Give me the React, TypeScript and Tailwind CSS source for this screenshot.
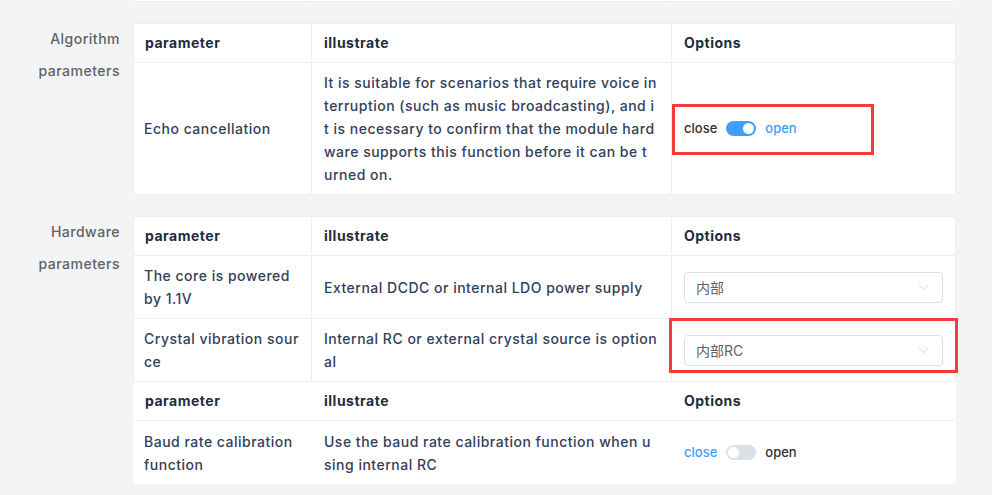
import { ChevronDown } from "lucide-react";

const font = { fontFamily: "Inter, 'Noto Sans CJK SC', sans-serif" };

function Switch({ on }: { on: boolean }) {
  return (
    <div className="flex items-center text-[13px] tracking-normal">
      <span className={on ? "text-[#303133]" : "text-[#409eff]"}>close</span>
      <span
        className={`mx-[9px] flex h-[15px] w-[30px] items-center rounded-full px-[2px] ${
          on ? "justify-end bg-[#409eff]" : "justify-start bg-[#dcdfe6]"
        }`}
      >
        <span className="h-[11px] w-[11px] rounded-full bg-white" />
      </span>
      <span className={on ? "text-[#409eff]" : "text-[#303133]"}>open</span>
    </div>
  );
}

function Select({ value }: { value: string }) {
  return (
    <div className="flex h-[31px] w-[259px] items-center justify-between rounded-[4px] border border-[#dcdfe6] bg-white pl-[11px] pr-[10px] text-[14px] font-normal tracking-normal text-[#606266]">
      <span>{value}</span>
      <ChevronDown size={17} strokeWidth={1} className="text-[#c0c4cc]" />
    </div>
  );
}

function Lines({ lines }: { lines: string[] }) {
  return (
    <>
      {lines.map((l, i) => (
        <div key={i} className="whitespace-nowrap">
          {l}
        </div>
      ))}
    </>
  );
}

function HeaderRow({ dividers = true }: { dividers?: boolean }) {
  const d = dividers ? "border-r border-[#ebeef5]" : "border-r border-transparent";
  return (
    <div className="flex h-[39px] border-b border-[#ebeef5] pb-[1px] font-bold text-[#1f2d3d]">
      <div className={`flex w-[178px] items-center pl-[11px] ${d}`}>parameter</div>
      <div className={`flex w-[360px] items-center pl-[12px] ${d}`}>illustrate</div>
      <div className="flex flex-1 items-center pl-[12px]">Options</div>
    </div>
  );
}

function Label({ a, b }: { a: string; b: string }) {
  return (
    <div className="w-[120px] shrink-0 text-right text-[14px] leading-[32px] text-[#606266]">
      <div>{a}</div>
      <div>{b}</div>
    </div>
  );
}

export default function App() {
  return (
    <div
      className="h-[495px] w-[992px] overflow-hidden bg-[#f3f4f5] text-[14px] font-medium leading-[23px] tracking-[0.5px] text-[#33405a]"
      style={font}
    >
      {/* tail of previous table */}
      <div className="ml-[133px] flex h-[2px] w-[823px] border-b border-[#ebeef5] bg-white">
        <div className="w-[178px] border-r border-[#ebeef5]" />
        <div className="w-[360px] border-r border-[#ebeef5]" />
      </div>

      {/* Algorithm parameters */}
      <div className="mt-[21px] flex">
        <Label a="Algorithm" b="parameters" />
        <div className="ml-[13px] w-[823px] border border-[#ebeef5] bg-white">
          <HeaderRow />
          <div className="flex h-[131px]">
            <div className="flex w-[178px] items-center border-r border-[#ebeef5] pl-[10px]">Echo cancellation</div>
            <div className="flex w-[360px] flex-col justify-center border-r border-[#ebeef5] pl-[12px]">
              <Lines
                lines={[
                  "It is suitable for scenarios that require voice in",
                  "terruption (such as music broadcasting), and i",
                  "t is necessary to confirm that the module hard",
                  "ware supports this function before it can be t",
                  "urned on.",
                ]}
              />
            </div>
            <div className="relative flex flex-1 items-center pl-[12px]">
              <Switch on />
              <div className="pointer-events-none absolute left-[0px] top-[41px] h-[51px] w-[202px] border-[3px] border-[#f53b3b]" />
            </div>
          </div>
        </div>
      </div>

      {/* Hardware parameters */}
      <div className="mt-[21px] flex">
        <Label a="Hardware" b="parameters" />
        <div className="ml-[13px] w-[823px]">
          <div className="border border-b-0 border-[#ebeef5] bg-white">
            <HeaderRow />
            <div className="flex h-[63px] border-b border-[#ebeef5]">
              <div className="flex w-[178px] flex-col justify-center border-r border-[#ebeef5] pl-[10px]">
                <Lines lines={["The core is powered", "by 1.1V"]} />
              </div>
              <div className="flex w-[360px] items-center border-r border-[#ebeef5] pl-[12px]">
                External DCDC or internal LDO power supply
              </div>
              <div className="flex flex-1 items-center pl-[12px]">
                <Select value="内部" />
              </div>
            </div>
            <div className="flex h-[63px] border-b border-[#ebeef5]">
              <div className="flex w-[178px] flex-col justify-center border-r border-[#ebeef5] pl-[10px]">
                <Lines lines={["Crystal vibration sour", "ce"]} />
              </div>
              <div className="flex w-[360px] flex-col justify-center border-r border-[#ebeef5] pl-[12px]">
                <Lines lines={["Internal RC or external crystal source is option", "al"]} />
              </div>
              <div className="relative flex flex-1 items-center pl-[12px]">
                <Select value="内部RC" />
                <div className="pointer-events-none absolute left-[-3px] top-[-1px] h-[55px] w-[289px] border-[3px] border-[#f53b3b]" />
              </div>
            </div>
          </div>
          <div className="border-x border-transparent bg-white">
            <HeaderRow dividers={false} />
            <div className="flex h-[63px]">
              <div className="flex w-[178px] flex-col justify-center pl-[10px]">
                <Lines lines={["Baud rate calibration", "function"]} />
              </div>
              <div className="flex w-[360px] flex-col justify-center pl-[12px]">
                <Lines lines={["Use the baud rate calibration function when u", "sing internal RC"]} />
              </div>
              <div className="flex flex-1 items-center pl-[12px]">
                <Switch on={false} />
              </div>
            </div>
          </div>
        </div>
      </div>
    </div>
  );
}
